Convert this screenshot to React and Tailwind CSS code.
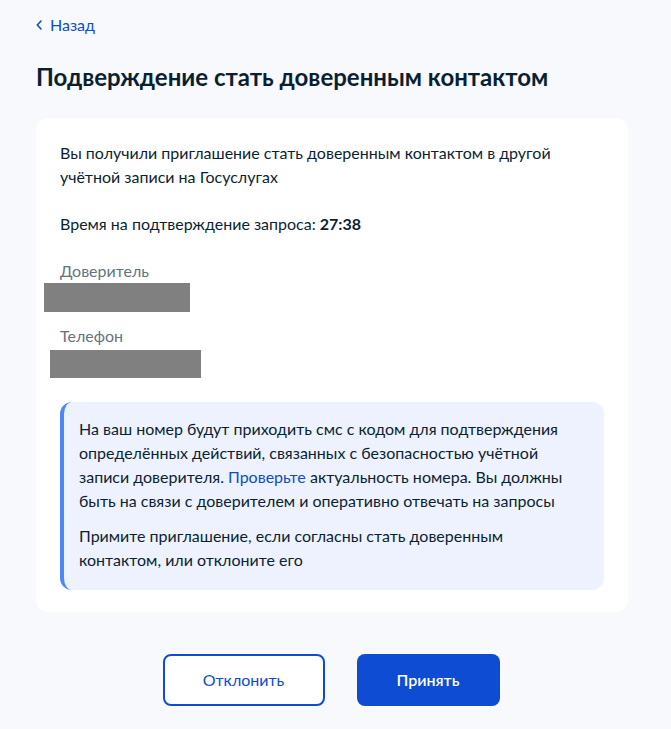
import React from "react";

const App = () => {
  return (
    <div
      className="min-h-[729px] bg-[#f7f9fc] pl-9 pr-[43px] pt-[13px] pb-6 text-[#0b1f33]"
      style={{ fontFamily: "Lato, 'Noto Sans', sans-serif" }}
    >
      {/* Back */}
      <a href="#" className="flex items-center gap-[8px] text-[16px] leading-[24px] text-[#0d4cd3]">
        <svg width="6" height="10" viewBox="0 0 6 10" fill="none">
          <path d="M5 1L1.3 5L5 9" stroke="#0d4cd3" strokeWidth="1.6" strokeLinecap="round" strokeLinejoin="round" />
        </svg>
        Назад
      </a>

      <h1 className="mt-[24px] text-[24px] leading-[32px] font-bold">
        Подверждение стать доверенным контактом
      </h1>

      <div className="mt-[25px] rounded-xl bg-white px-6 pt-[23px] pb-[22px]">
        <p className="text-[16px] leading-[24px]">
          Вы получили приглашение стать доверенным контактом в другой
          <br />
          учётной записи на Госуслугах
        </p>
        <p className="mt-[23px] text-[16px] leading-[24px]">
          Время на подтверждение запроса: <b>27:38</b>
        </p>

        <div className="mt-[25px]">
          <div className="text-[16px] leading-[20px] text-[#66727f]">Доверитель</div>
          <div className="-ml-4 mt-[2px] h-[29px] w-[146px] bg-[#808080]" />
        </div>

        <div className="mt-[12px]">
          <div className="text-[16px] leading-[24px] text-[#66727f]">Телефон</div>
          <div className="-ml-[10px] mt-[2px] h-[28px] w-[151px] bg-[#808080]" />
        </div>

        {/* notice */}
        <div className="mt-6 rounded-xl border-l-[4px] border-[#4d87f5] bg-[#edf2fe] pl-[15px] pr-5 pt-[15px] pb-[18px]">
          <p className="text-[16px] leading-[24px]">
            На ваш номер будут приходить смс с кодом для подтверждения
            определённых действий, связанных с безопасностью учётной
            записи доверителя. <a href="#" className="text-[#0d4cd3]">Проверьте</a> актуальность номера. Вы должны
            быть на связи с доверителем и оперативно отвечать на запросы
          </p>
          <p className="mt-[11px] text-[16px] leading-[24px]">
            Примите приглашение, если согласны стать доверенным
            <br />
            контактом, или отклоните его
          </p>
        </div>
      </div>

      <div className="mt-[42px] flex justify-center gap-8 pr-[2px]">
        <button className="h-[52px] w-[162px] rounded-lg border-2 border-[#0d4cd3] bg-white text-[16px] text-[#0d4cd3]">
          Отклонить
        </button>
        <button className="h-[52px] w-[143px] rounded-lg bg-[#0d4cd3] text-[16px] font-semibold text-white">
          Принять
        </button>
      </div>
    </div>
  );
};

export default App;
